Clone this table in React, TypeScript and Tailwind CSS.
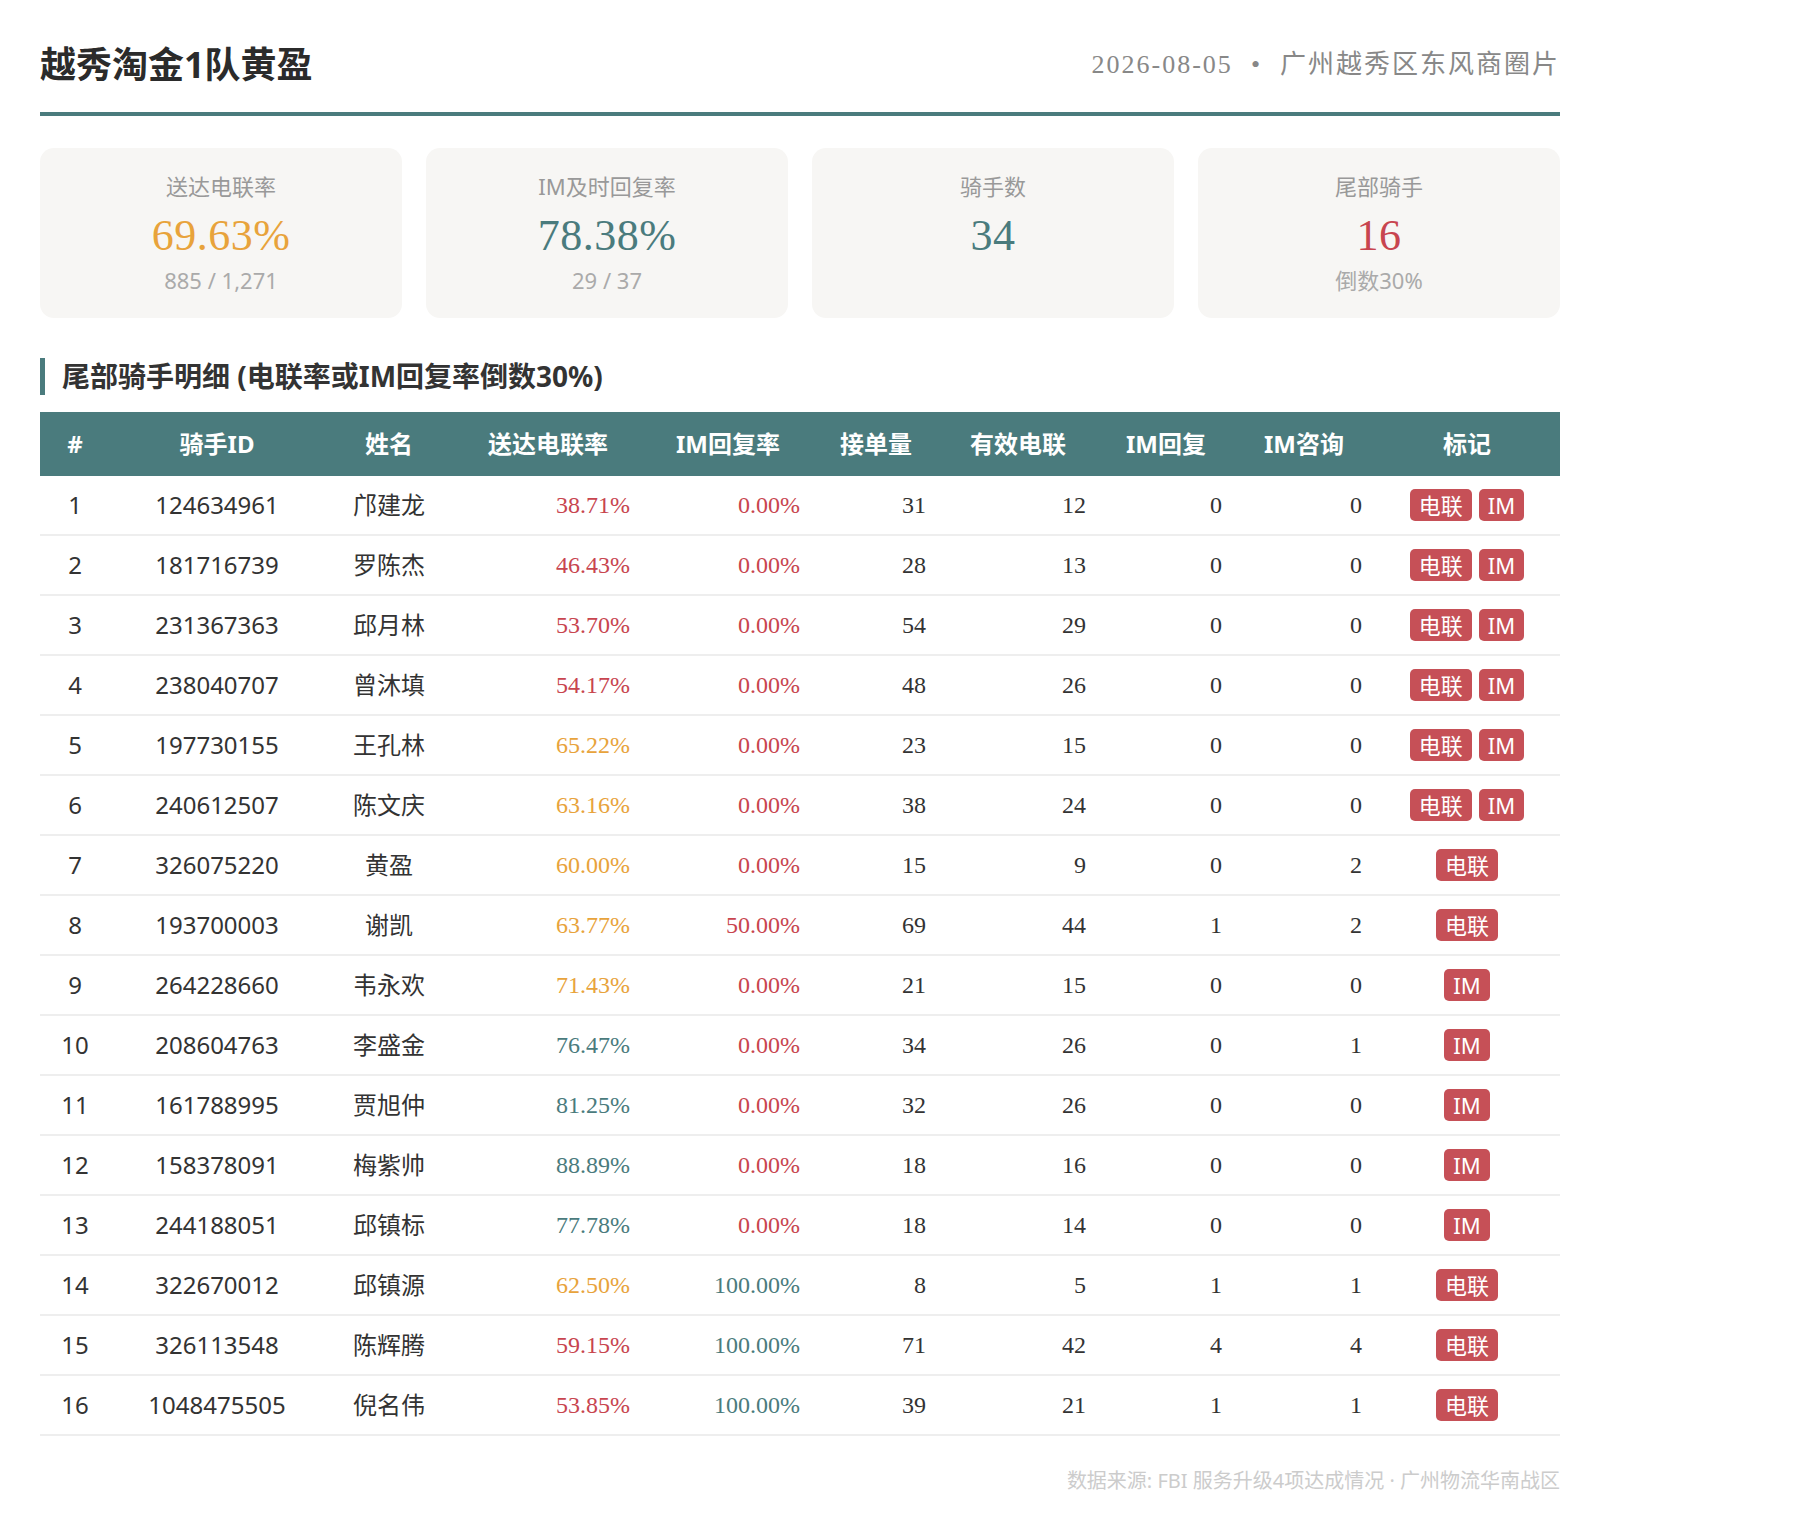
// Tail-rider report for one delivery team: KPI cards plus the bottom-30% rider table.

const SANS = 'font-["Noto_Sans","Noto_Sans_CJK_SC",sans-serif]'
const SERIF = 'font-["Liberation_Serif","Noto_Sans_CJK_SC",serif]'

type Tag = '电联' | 'IM'

interface Rider {
  id: string
  name: string
  callRate: string
  imRate: string
  orders: number
  calls: number
  imReplies: number
  imAsks: number
  tags: Tag[]
}

const BOTH: Tag[] = ['电联', 'IM']

const RIDERS: Rider[] = [
  { id: '124634961', name: '邝建龙', callRate: '38.71%', imRate: '0.00%', orders: 31, calls: 12, imReplies: 0, imAsks: 0, tags: BOTH },
  { id: '181716739', name: '罗陈杰', callRate: '46.43%', imRate: '0.00%', orders: 28, calls: 13, imReplies: 0, imAsks: 0, tags: BOTH },
  { id: '231367363', name: '邱月林', callRate: '53.70%', imRate: '0.00%', orders: 54, calls: 29, imReplies: 0, imAsks: 0, tags: BOTH },
  { id: '238040707', name: '曾沐填', callRate: '54.17%', imRate: '0.00%', orders: 48, calls: 26, imReplies: 0, imAsks: 0, tags: BOTH },
  { id: '197730155', name: '王孔林', callRate: '65.22%', imRate: '0.00%', orders: 23, calls: 15, imReplies: 0, imAsks: 0, tags: BOTH },
  { id: '240612507', name: '陈文庆', callRate: '63.16%', imRate: '0.00%', orders: 38, calls: 24, imReplies: 0, imAsks: 0, tags: BOTH },
  { id: '326075220', name: '黄盈', callRate: '60.00%', imRate: '0.00%', orders: 15, calls: 9, imReplies: 0, imAsks: 2, tags: ['电联'] },
  { id: '193700003', name: '谢凯', callRate: '63.77%', imRate: '50.00%', orders: 69, calls: 44, imReplies: 1, imAsks: 2, tags: ['电联'] },
  { id: '264228660', name: '韦永欢', callRate: '71.43%', imRate: '0.00%', orders: 21, calls: 15, imReplies: 0, imAsks: 0, tags: ['IM'] },
  { id: '208604763', name: '李盛金', callRate: '76.47%', imRate: '0.00%', orders: 34, calls: 26, imReplies: 0, imAsks: 1, tags: ['IM'] },
  { id: '161788995', name: '贾旭仲', callRate: '81.25%', imRate: '0.00%', orders: 32, calls: 26, imReplies: 0, imAsks: 0, tags: ['IM'] },
  { id: '158378091', name: '梅紫帅', callRate: '88.89%', imRate: '0.00%', orders: 18, calls: 16, imReplies: 0, imAsks: 0, tags: ['IM'] },
  { id: '244188051', name: '邱镇标', callRate: '77.78%', imRate: '0.00%', orders: 18, calls: 14, imReplies: 0, imAsks: 0, tags: ['IM'] },
  { id: '322670012', name: '邱镇源', callRate: '62.50%', imRate: '100.00%', orders: 8, calls: 5, imReplies: 1, imAsks: 1, tags: ['电联'] },
  { id: '326113548', name: '陈辉腾', callRate: '59.15%', imRate: '100.00%', orders: 71, calls: 42, imReplies: 4, imAsks: 4, tags: ['电联'] },
  { id: '1048475505', name: '倪名伟', callRate: '53.85%', imRate: '100.00%', orders: 39, calls: 21, imReplies: 1, imAsks: 1, tags: ['电联'] },
]

// <60 red, <75 amber, otherwise teal (same thresholds for both rate columns)
function rateColor(rate: string) {
  const v = parseFloat(rate)
  if (v < 60) return 'text-[#c8454f]'
  if (v < 75) return 'text-[#e8a33b]'
  return 'text-[#4a7b7d]'
}

const GRID =
  'grid grid-cols-[70px_214px_130px_188px_172px_124px_160px_136px_140px_186px]'

const HEADERS = ['#', '骑手ID', '姓名', '送达电联率', 'IM回复率', '接单量', '有效电联', 'IM回复', 'IM咨询', '标记']

function StatCard({ label, value, sub, tone }: { label: string; value: string; sub?: string; tone: string }) {
  return (
    <div className="flex flex-col items-center rounded-[14px] bg-[#f7f6f4] pt-[22px] pb-[23px]">
      <div className="text-[22px] leading-[32px] text-[#999999]">{label}</div>
      <div className={`${SERIF} mt-[6px] text-[44px] leading-[56px] tracking-[0.5px] ${tone}`}>{value}</div>
      {sub && <div className="mt-px text-[22px] leading-[30px] text-[#aaaaaa]">{sub}</div>}
    </div>
  )
}

function Badge({ children }: { children: string }) {
  return (
    <span className="rounded-[5px] bg-[#c65057] px-[9px] text-[22px] leading-[32px] text-white">
      {children}
    </span>
  )
}

export default function App() {
  return (
    <div className={`${SANS} min-h-[1536px] bg-white px-10 text-[#333333]`}>
      <div className="w-[1520px]">
        {/* title bar */}
        <div className="flex items-center justify-between border-b-4 border-[#4a7b7d] pt-[42px] pb-[25px]">
          <h1 className="text-[36px] font-bold leading-[45px] text-[#2b2b2b]">越秀淘金1队黄盈</h1>
          <div className={`${SERIF} text-[26px] leading-[36px] tracking-[2px] text-[#888888]`}>
            <span>2026-08-05</span>
            <span className="mx-[18px]">•</span>
            <span>广州越秀区东风商圈片</span>
          </div>
        </div>

        {/* KPI cards */}
        <div className="mt-8 grid grid-cols-4 gap-6">
          <StatCard label="送达电联率" value="69.63%" sub="885 / 1,271" tone="text-[#e8a33b]" />
          <StatCard label="IM及时回复率" value="78.38%" sub="29 / 37" tone="text-[#4a7b7d]" />
          <StatCard label="骑手数" value="34" tone="text-[#4a7b7d]" />
          <StatCard label="尾部骑手" value="16" sub="倒数30%" tone="text-[#c8454f]" />
        </div>

        {/* section heading */}
        <h2 className="mt-10 border-l-[5px] border-[#4a7b7d] pl-[17px] text-[28px] font-bold leading-[37px] text-[#333333]">
          尾部骑手明细 (电联率或IM回复率倒数30%)
        </h2>

        {/* rider table */}
        <div className="mt-[17px]">
          <div className={`${GRID} h-16 items-center bg-[#4a7b7d] text-center text-[24px] font-bold text-white`}>
            {HEADERS.map((h) => (
              <div key={h}>{h}</div>
            ))}
          </div>

          {RIDERS.map((r, i) => (
            <div key={r.id} className={`${GRID} h-[60px] items-center border-b-2 border-[#eeeeee] text-[24px]`}>
              <div className="text-center">{i + 1}</div>
              <div className="text-center">{r.id}</div>
              <div className="text-center">{r.name}</div>
              <div className={`${SERIF} pr-3 text-right ${rateColor(r.callRate)}`}>{r.callRate}</div>
              <div className={`${SERIF} pr-3.5 text-right ${rateColor(r.imRate)}`}>{r.imRate}</div>
              <div className={`${SERIF} pr-3 text-right`}>{r.orders}</div>
              <div className={`${SERIF} pr-3 text-right`}>{r.calls}</div>
              <div className={`${SERIF} pr-3 text-right`}>{r.imReplies}</div>
              <div className={`${SERIF} pr-3 text-right`}>{r.imAsks}</div>
              <div className="flex justify-center gap-[7px]">
                {r.tags.map((t) => (
                  <Badge key={t}>{t}</Badge>
                ))}
              </div>
            </div>
          ))}
        </div>

        <div className="mt-[30px] text-right text-[20px] leading-[30px] text-[#cccccc]">
          数据来源: FBI 服务升级4项达成情况 · 广州物流华南战区
        </div>
      </div>
    </div>
  )
}
